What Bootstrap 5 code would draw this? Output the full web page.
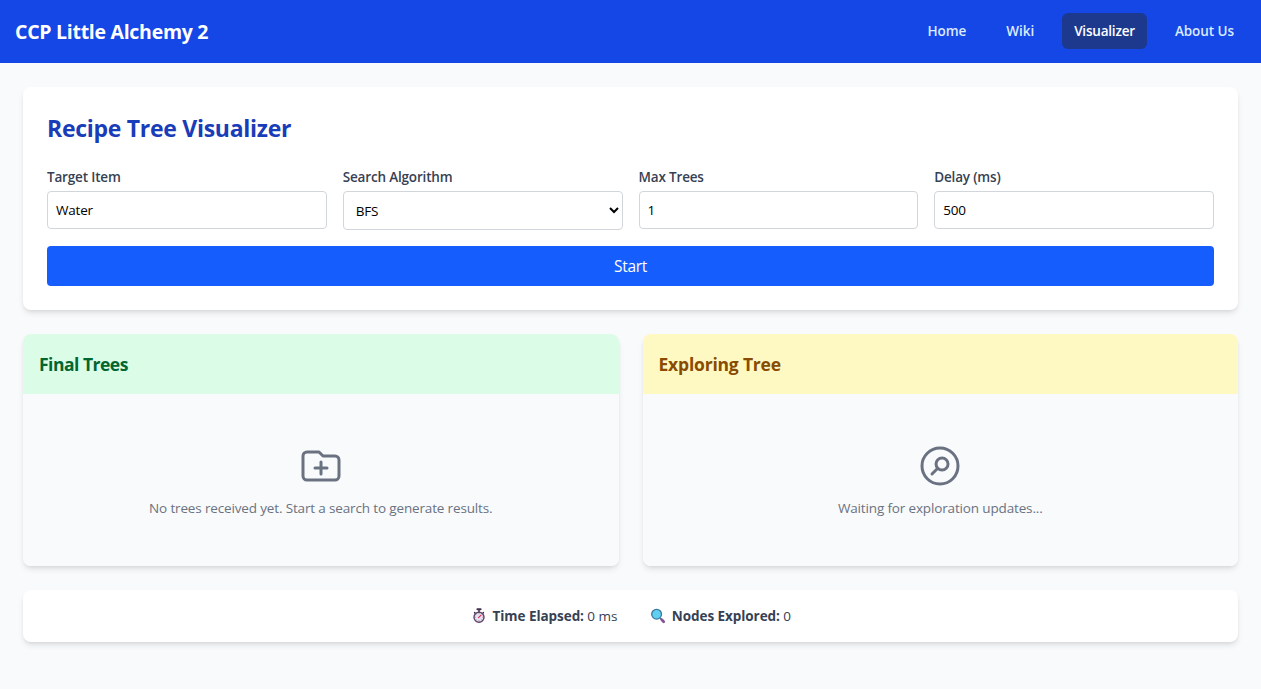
<!DOCTYPE html>
<html lang="en">
<head>
<meta charset="utf-8">
<meta name="viewport" content="width=device-width, initial-scale=1">
<title>CCP Little Alchemy 2</title>
<link href="https://cdn.jsdelivr.net/npm/bootstrap@5.3.0/dist/css/bootstrap.min.css" rel="stylesheet">
<style>
body{background:#f9fafc;font-family:"Segoe UI","Open Sans","Noto Sans",sans-serif;font-size:14px;line-height:20px;color:#364153}
.topbar{background:#1447e6;height:63px;padding:0 15px 1px 15px}
.topbar .navbar-brand{font-size:19.5px;line-height:28px;font-weight:700;color:#fff;padding:1px 0 0;letter-spacing:-.28px}
.topbar .nav-link{color:#dbeafe;font-weight:600;font-size:13.5px;line-height:20px;padding:8px 12px;border-radius:6px;letter-spacing:-.06px}
.topbar .nav-link.active{background:#1c398e;color:#fff;letter-spacing:-.2px}
.page{max-width:1215px;margin:24px auto 0;padding-bottom:24px}
.panel{border:0;border-radius:8px;box-shadow:0 4px 6px -1px rgba(0,0,0,.1),0 2px 4px -2px rgba(0,0,0,.1);overflow:hidden}
.page-title{font-size:23px;line-height:32px;font-weight:700;color:#193cb8;margin:1px 0 23px;letter-spacing:-.28px}
.form-label{display:block;font-size:13.5px;font-weight:600;line-height:20px;margin:0 0 4px;color:#364153;letter-spacing:-.17px}
.field{display:block;width:100%;height:38px;padding:8px;border:1px solid #d1d5dc;border-radius:4px;background:#fff;color:#000;font-size:13.5px;line-height:20px;letter-spacing:-.2px}
select.field{height:39px}
.btn-start{background:#155dfc;color:#fff;height:40px;border:0;border-radius:4px;font-size:15.5px;line-height:24px;padding:8px;letter-spacing:-.3px}
.panel-head{font-size:17.5px;line-height:28px;font-weight:700;padding:16px;margin:0;letter-spacing:-.5px}
.head-final{background:#dbfce7;color:#016630}
.head-explore{background:#fef9c2;color:#894b00;letter-spacing:-.2px}
.panel-body{background:#f9fafc;color:#6a7282;padding:48px 16px;font-size:13.5px;letter-spacing:-.15px}
.stats{height:52px;font-size:13.5px;gap:33px;letter-spacing:-.06px;padding-left:1px}
.stats svg{margin-right:5.5px}
</style>
</head>
<body>
<nav class="topbar d-flex align-items-center justify-content-between">
  <a class="navbar-brand" href="#">CCP Little Alchemy 2</a>
  <div class="nav gap-3 align-items-center">
    <a class="nav-link" href="#">Home</a>
    <a class="nav-link" href="#">Wiki</a>
    <a class="nav-link active" href="#">Visualizer</a>
    <a class="nav-link" href="#">About Us</a>
  </div>
</nav>
<main class="page d-flex flex-column gap-4">
  <section class="card panel p-4">
    <h1 class="page-title">Recipe Tree Visualizer</h1>
    <div class="row g-3">
      <div class="col-3"><label class="form-label" for="target">Target Item</label><input id="target" class="field" value="Water"></div>
      <div class="col-3"><label class="form-label" for="algo">Search Algorithm</label><select id="algo" class="field"><option>BFS</option><option>DFS</option></select></div>
      <div class="col-3"><label class="form-label" for="max">Max Trees</label><input id="max" class="field" type="number" value="1"></div>
      <div class="col-3"><label class="form-label" for="delay">Delay (ms)</label><input id="delay" class="field" type="number" value="500"></div>
      <div class="col-12"><button class="btn btn-start w-100 d-block">Start</button></div>
    </div>
  </section>
  <div class="row gx-4">
    <div class="col-6">
      <section class="card panel">
        <h2 class="panel-head head-final">Final Trees</h2>
        <div class="panel-body d-flex flex-column align-items-center">
          <svg class="mb-2" width="48" height="48" viewBox="0 0 24 24" fill="none" stroke="currentColor" stroke-width="1.5" stroke-linecap="round" stroke-linejoin="round"><path d="M9 13h6m-3-3v6m-9 1V7a2 2 0 012-2h6l2 2h6a2 2 0 012 2v8a2 2 0 01-2 2H5a2 2 0 01-2-2z"/></svg>
          <span>No trees received yet. Start a search to generate results.</span>
        </div>
      </section>
    </div>
    <div class="col-6">
      <section class="card panel">
        <h2 class="panel-head head-explore">Exploring Tree</h2>
        <div class="panel-body d-flex flex-column align-items-center">
          <svg class="mb-2" width="48" height="48" viewBox="0 0 24 24" fill="none" stroke="currentColor" stroke-width="1.5" stroke-linecap="round" stroke-linejoin="round"><path d="M8 16l2.879-2.879m0 0a3 3 0 104.243-4.242 3 3 0 00-4.243 4.242zM21 12a9 9 0 11-18 0 9 9 0 0118 0z"/></svg>
          <span>Waiting for exploration updates...</span>
        </div>
      </section>
    </div>
  </div>
  <section class="card panel stats flex-row align-items-center justify-content-center">
    <div class="d-flex align-items-center">
      <svg width="16" height="16" viewBox="0 0 16 16"><path d="M6.4 1.3h3.2" stroke="#43304f" stroke-width="2" stroke-linecap="round"/><path d="M8 2v2M3.6 4.6l.6.6M12.4 4.6l-.6.6" stroke="#43304f" stroke-width="1.5" stroke-linecap="round"/><circle cx="8" cy="9.2" r="5" fill="#e8e3f0" stroke="#5b4369" stroke-width="1.4"/><path d="M8 5.4v.8M8 12.2v.8M4.3 9.2h.8M11 9.2h.8M5.4 6.6l.5.5M5.4 11.8l.5-.5M10.6 11.8l-.5-.5" stroke="#8a7898" stroke-width=".8"/><path d="M7.5 9.7l2.6-2.6" stroke="#e0315b" stroke-width="1.2" stroke-linecap="round"/></svg>
      <span><b>Time Elapsed:</b> 0 ms</span>
    </div>
    <div class="d-flex align-items-center">
      <svg width="16" height="16" viewBox="0 0 16 16"><path d="M10.2 10.2l1.5 1.5" stroke="#4a5870" stroke-width="1.6"/><path d="M11.8 11.8l1.9 1.9" stroke="#86509a" stroke-width="2.7" stroke-linecap="round"/><circle cx="6.6" cy="6.2" r="4.9" fill="#5fd0ef" stroke="#3c789e" stroke-width="1.3"/></svg>
      <span><b>Nodes Explored:</b> 0</span>
    </div>
  </section>
</main>
<script src="https://cdn.jsdelivr.net/npm/bootstrap@5.3.0/dist/js/bootstrap.bundle.min.js"></script>
</body>
</html>
